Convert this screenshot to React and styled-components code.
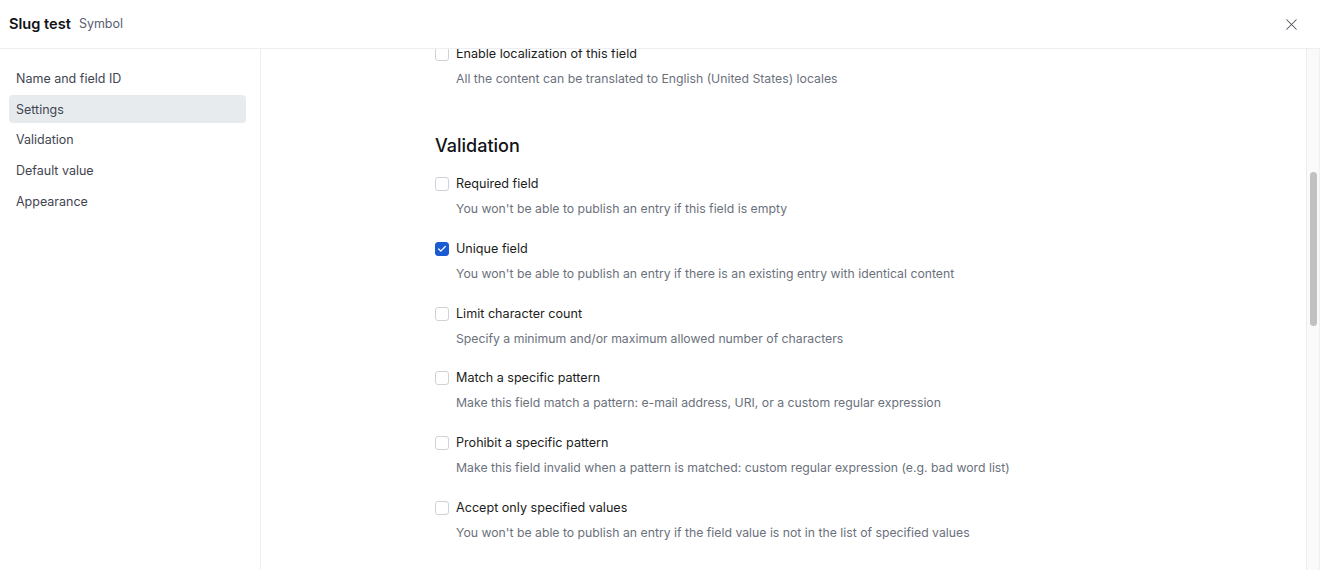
import React from 'react'
import styled, { createGlobalStyle } from 'styled-components'
import { X, Check } from 'lucide-react'

const GlobalStyle = createGlobalStyle`
  html, body {
    margin: 0;
    padding: 0;
    background: #ffffff;
    font-family: Inter, "Noto Sans", sans-serif;
    color: #1b1d21;
    -webkit-font-smoothing: antialiased;
  }
  * { box-sizing: border-box; }
`

const Modal = styled.div`
  width: 1320px;
  height: 570px;
  display: flex;
  flex-direction: column;
  overflow: hidden;
  background: #fff;
`

const Header = styled.header`
  height: 49px;
  flex-shrink: 0;
  display: flex;
  align-items: center;
  padding: 0 17px 0 9px;
  border-bottom: 1px solid #eceef1;
`

const Title = styled.h1`
  margin: 0;
  font-size: 14.6px;
  font-weight: 600;
  color: #111317;
  line-height: 20px;
`

const Subtitle = styled.span`
  margin-left: 8px;
  font-size: 12.5px;
  color: #5a6170;
  line-height: 20px;
`

const CloseButton = styled.button`
  margin-left: auto;
  width: 24px;
  height: 24px;
  padding: 0;
  display: flex;
  align-items: center;
  justify-content: center;
  border: none;
  background: none;
  color: #4a4f58;
  cursor: pointer;
`

const Body = styled.div`
  flex: 1;
  display: flex;
  min-height: 0;
`

const Sidebar = styled.nav`
  width: 261px;
  flex-shrink: 0;
  border-right: 1px solid #eceef1;
  padding: 15.3px 14px 0 9px;
  display: flex;
  flex-direction: column;
  gap: 2.8px;
`

const NavItem = styled.div`
  height: 28px;
  display: flex;
  align-items: center;
  padding: 0 7px;
  border-radius: 4px;
  font-size: 12.5px;
  color: #3f4550;
  background: ${p => (p.$active ? '#e8ebee' : 'transparent')};
`

const Main = styled.main`
  flex: 1;
  overflow: hidden;
  padding-left: 174px;
`

const Content = styled.div`
  margin-top: -5px;
  width: 640px;
`

const Section = styled.section`
  & + & {
    margin-top: 43px;
  }
`

const SectionTitle = styled.h2`
  margin: 0 0 14px;
  font-size: 18px;
  font-weight: 500;
  line-height: 28px;
  color: #111317;
`

const Field = styled.div`
  & + & {
    margin-top: 19.8px;
  }
`

const FieldRow = styled.label`
  display: flex;
  align-items: center;
  gap: 7px;
  height: 20px;
`

const Box = styled.span`
  width: 14px;
  height: 14px;
  flex-shrink: 0;
  border-radius: 3px;
  display: flex;
  align-items: center;
  justify-content: center;
  border: 1px solid ${p => (p.$checked ? '#1a5bd1' : '#cfd3d9')};
  background: ${p => (p.$checked ? '#1a5bd1' : '#fff')};
  color: #fff;
`

const Label = styled.span`
  font-size: 12.6px;
  line-height: 20px;
  color: #1b1d21;
`

const Hint = styled.p`
  margin: 5px 0 0 21px;
  font-size: 12.25px;
  line-height: 20px;
  color: #6b717c;
`

const ScrollTrack = styled.div`
  width: 14px;
  flex-shrink: 0;
  background: #fafafa;
  border-left: 1px solid #ececec;
  border-right: 1px solid #f0f0f0;
  padding: 123px 0 0 3px;
`

const ScrollThumb = styled.div`
  width: 7px;
  height: 154px;
  border-radius: 4px;
  background: #c1c1c1;
`

const navItems = ['Name and field ID', 'Settings', 'Validation', 'Default value', 'Appearance']

const validations = [
  { label: 'Required field', hint: "You won't be able to publish an entry if this field is empty" },
  { label: 'Unique field', hint: "You won't be able to publish an entry if there is an existing entry with identical content", checked: true },
  { label: 'Limit character count', hint: 'Specify a minimum and/or maximum allowed number of characters' },
  { label: 'Match a specific pattern', hint: 'Make this field match a pattern: e-mail address, URI, or a custom regular expression' },
  { label: 'Prohibit a specific pattern', hint: 'Make this field invalid when a pattern is matched: custom regular expression (e.g. bad word list)' },
  { label: 'Accept only specified values', hint: "You won't be able to publish an entry if the field value is not in the list of specified values" }
]

const CheckField = ({ label, hint, checked }) => (
  <Field>
    <FieldRow>
      <Box $checked={checked}>
        {checked && <Check size={10} strokeWidth={3} />}
      </Box>
      <Label>{label}</Label>
    </FieldRow>
    <Hint>{hint}</Hint>
  </Field>
)

const App = () => {
  return (
    <>
      <GlobalStyle />
      <Modal>
        <Header>
          <Title>Slug test</Title>
          <Subtitle>Symbol</Subtitle>
          <CloseButton type="button" aria-label="Close">
            <X size={19} strokeWidth={1.3} />
          </CloseButton>
        </Header>
        <Body>
          <Sidebar>
            {navItems.map(item => (
              <NavItem key={item} $active={item === 'Settings'}>{item}</NavItem>
            ))}
          </Sidebar>
          <Main>
            <Content>
              <Section>
                <CheckField
                  label="Enable localization of this field"
                  hint="All the content can be translated to English (United States) locales"
                />
              </Section>
              <Section>
                <SectionTitle>Validation</SectionTitle>
                {validations.map(v => (
                  <CheckField key={v.label} {...v} />
                ))}
              </Section>
            </Content>
          </Main>
          <ScrollTrack>
            <ScrollThumb />
          </ScrollTrack>
        </Body>
      </Modal>
    </>
  )
}

export default App
